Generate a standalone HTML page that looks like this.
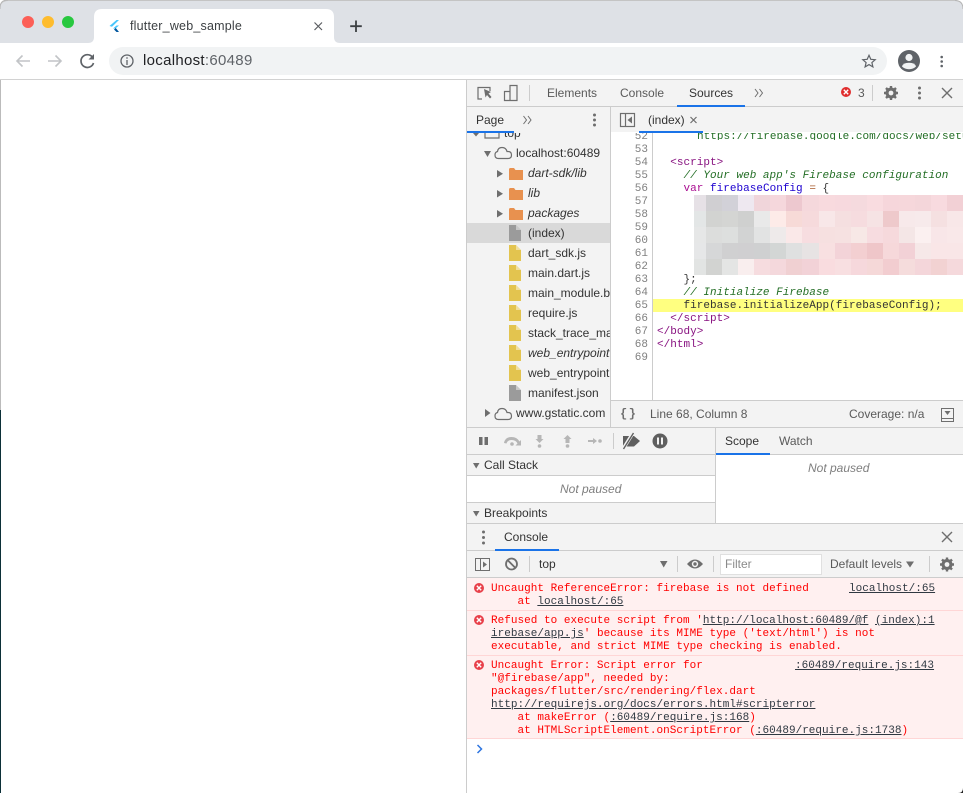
<!DOCTYPE html>
<html><head><meta charset="utf-8"><title>flutter_web_sample</title>
<style>
html,body{margin:0;padding:0;width:963px;height:793px;overflow:hidden;background:#fff}
body{position:relative;font-family:"Liberation Sans",sans-serif;font-size:12px;color:#333}
div{position:absolute}
.t{position:absolute;white-space:pre;line-height:14px}
.m{position:absolute;white-space:pre;font-family:"Liberation Mono",monospace;font-size:11px;line-height:13px;margin-top:1px;letter-spacing:.02px}
.b{position:absolute;background:#ccc}
.e{color:#f00}
.u{color:#303942;text-decoration:underline}
.n{position:absolute;left:611px;width:37px;text-align:right;color:#808080;font-family:"Liberation Mono",monospace;font-size:11px;line-height:13px;margin-top:1px}
.p{color:#881280}.c{color:#236e25;font-style:italic}
svg{position:absolute;overflow:visible}
</style></head><body>
<div style="left:0;top:0;width:963px;height:793px;background:#fff"></div>
<div style="left:0;top:80px;width:1px;height:330px;background:#bbb"></div>
<div style="left:0;top:410px;width:1px;height:383px;background:#0c3038"></div>
<div style="left:0;top:0;width:963px;height:43px;background:#dee1e6;border-radius:8px 8px 0 0;box-sizing:border-box;border-top:1px solid #c4c4c4"></div>
<svg style="left:0;top:0" width="963" height="80">
<path d="M0 9V8Q0 0 8 0" fill="none" stroke="#b5b5b5"/><path d="M955 0.5Q963 0.5 963 9" fill="none" stroke="#b5b5b5"/>
<circle cx="28" cy="22" r="6" fill="#fc5f57"/><circle cx="48" cy="22" r="6" fill="#febc2e"/><circle cx="68" cy="22" r="6" fill="#28c840"/>
<path d="M88 43Q94 43 94 37V17Q94 9 102 9H326Q334 9 334 17V37Q334 43 340 43Z" fill="#fff"/>
<path d="M109.500 26L116.500 20H119L112 26.800Z" fill="#47c5fb"/><path d="M113 28.500L116.500 25.500H119L115.500 28.500Z" fill="#47c5fb"/><path d="M114 29.500L115.800 28L119 32H116.500Z" fill="#00569e"/>
<path d="M314.500 22.500L322 30M322 22.500L314.500 30" stroke="#5a5d61" stroke-width="1.200" fill="none"/>
<path d="M356 20.500V32M350.200 26.200H361.800" stroke="#3c4043" stroke-width="1.800" fill="none"/>
<path d="M30 61H17M22.500 55.500L17 61L22.500 66.500" stroke="#c2c4c7" stroke-width="1.600" fill="none"/>
<path d="M48 61H61M55.500 55.500L61 61L55.500 66.500" stroke="#c2c4c7" stroke-width="1.600" fill="none"/>
<path d="M92.500 57.200A6.400 6.400 0 1 0 93.500 63" stroke="#5f6368" stroke-width="1.700" fill="none"/><path d="M94 54V59.500H88.500Z" fill="#5f6368"/>
</svg>
<div style="left:109px;top:47px;width:778px;height:28px;background:#f1f3f4;border-radius:14px"></div>
<div class="t" style="left:130px;top:19px;color:#3c4043;font-size:12.500px;letter-spacing:.2px">flutter_web_sample</div>
<div class="t" style="left:143px;top:53px;font-size:15px;line-height:16px;color:#202124;letter-spacing:.3px">localhost<span style="color:#5f6368">:60489</span></div>
<svg style="left:0;top:0" width="963" height="80">
<circle cx="127" cy="61" r="6" fill="none" stroke="#5f6368" stroke-width="1.300"/><path d="M127 60V65M127 57.300V58.700" stroke="#5f6368" stroke-width="1.300"/>
<path d="M869 55.300L870.800 59.300L875.200 59.700L871.900 62.600L872.900 66.900L869 64.600L865.100 66.900L866.100 62.600L862.800 59.700L867.200 59.300Z" fill="none" stroke="#5f6368" stroke-width="1.200"/>
<circle cx="909" cy="61" r="11" fill="#5f6368"/><circle cx="909" cy="57.500" r="3.600" fill="#f1f3f4"/><path d="M902 66.500Q903 62.800 909 62.800Q915 62.800 916 66.500Q913.500 69.200 909 69.200Q904.500 69.200 902 66.500Z" fill="#f1f3f4"/>
<circle cx="941.700" cy="57" r="1.300" fill="#5f6368"/><circle cx="941.700" cy="61.500" r="1.300" fill="#5f6368"/><circle cx="941.700" cy="66" r="1.300" fill="#5f6368"/>
</svg>
<div class="b" style="left:0;top:79px;width:963px;height:1px;background:#d2d2d2"></div>

<!-- devtools backgrounds -->
<div style="left:466px;top:80px;width:497px;height:26px;background:#f3f3f3"></div>
<div style="left:467px;top:107px;width:143px;height:25px;background:#f3f3f3"></div>
<div style="left:611px;top:107px;width:352px;height:25px;background:#f3f3f3"></div>
<div style="left:467px;top:132px;width:143px;height:296px;background:#f3f3f3"></div>
<div style="left:611px;top:401px;width:352px;height:26px;background:#f3f3f3"></div>
<div style="left:467px;top:428px;width:248px;height:26px;background:#f3f3f3"></div>
<div style="left:716px;top:428px;width:247px;height:26px;background:#f3f3f3"></div>
<div style="left:467px;top:455px;width:248px;height:20px;background:#f3f3f3"></div>
<div style="left:467px;top:503px;width:248px;height:20px;background:#f3f3f3"></div>
<div style="left:467px;top:524px;width:496px;height:26px;background:#f3f3f3"></div>
<div style="left:467px;top:551px;width:496px;height:26px;background:#f3f3f3"></div>
<div style="left:467px;top:223px;width:143px;height:20px;background:#d9d9d9"></div>
<div style="left:467px;top:578px;width:496px;height:160px;background:#fff0f0"></div>

<!-- borders -->
<div class="b" style="left:466px;top:80px;width:1px;height:713px"></div>
<div class="b" style="left:466px;top:106px;width:497px;height:1px"></div>
<div class="b" style="left:610px;top:107px;width:1px;height:321px"></div>
<div class="b" style="left:652px;top:132px;width:1px;height:268px"></div>
<div class="b" style="left:611px;top:400px;width:352px;height:1px"></div>
<div class="b" style="left:467px;top:427px;width:496px;height:1px"></div>
<div class="b" style="left:467px;top:454px;width:496px;height:1px"></div>
<div class="b" style="left:467px;top:475px;width:248px;height:1px"></div>
<div class="b" style="left:467px;top:502px;width:248px;height:1px"></div>
<div class="b" style="left:715px;top:428px;width:1px;height:95px"></div>
<div class="b" style="left:467px;top:523px;width:496px;height:1px"></div>
<div class="b" style="left:467px;top:550px;width:496px;height:1px"></div>
<div class="b" style="left:467px;top:577px;width:496px;height:1px"></div>
<div class="b" style="left:467px;top:610px;width:496px;height:1px;background:#ffd6d6"></div>
<div class="b" style="left:467px;top:655px;width:496px;height:1px;background:#ffd6d6"></div>
<div class="b" style="left:467px;top:738px;width:496px;height:1px;background:#ffd6d6"></div>
<div class="b" style="left:529px;top:85px;width:1px;height:16px"></div>
<div class="b" style="left:872px;top:85px;width:1px;height:16px"></div>
<div class="b" style="left:677px;top:105px;width:68px;height:2px;background:#1a73e8"></div>
<div class="b" style="left:639px;top:131px;width:64px;height:2px;background:#1a73e8"></div>
<div class="b" style="left:716px;top:453px;width:54px;height:2px;background:#1a73e8"></div>
<div class="b" style="left:495px;top:549px;width:64px;height:2px;background:#1a73e8"></div>

<!-- toolbar text -->
<div class="t" style="left:547px;top:86px;color:#5a5a5a">Elements</div>
<div class="t" style="left:620px;top:86px;color:#5a5a5a">Console</div>
<div class="t" style="left:689px;top:86px;color:#333">Sources</div>
<div class="t" style="left:858px;top:86px;color:#5a5a5a">3</div>
<div class="t" style="left:476px;top:113px;color:#333">Page</div>
<div class="t" style="left:648px;top:113px;color:#333">(index)</div>
<svg style="left:0;top:0" width="963" height="793">
<g fill="none" stroke="#6e6e6e" stroke-width="1.200">
<path d="M482 99H478V87.500H490V91"/><path d="M504.500 91.500H510V100.500H504.500ZM510 91V85.500H517V100.500H510" />
<path d="M755 89L758 93L755 97M759.500 89L762.500 93L759.500 97" stroke-width="1"/>
<path d="M523.500 116L526.500 120L523.500 124M528 116L531 120L528 124" stroke-width="1"/>
<path d="M942 88L952 98M952 88L942 98" stroke-width="1.400"/>
<path d="M690.500 117L696.500 123M696.500 117L690.500 123" stroke-width="1.200"/>
<rect x="620.500" y="113.500" width="14" height="13"/><path d="M625.500 113.500V126.500"/>
</g>
<path d="M484 89L491 92L488.500 93.500L491.500 97L490 98.500L487 95L485.500 97.500Z" fill="#6e6e6e"/>
<path d="M632 116.500V123.500L627.500 120Z" fill="#6e6e6e"/>
<circle cx="846" cy="92" r="5" fill="#e02d2d"/><path d="M843.800 89.800L848.200 94.200M848.200 89.800L843.800 94.200" stroke="#fff" stroke-width="1.400"/>
<g fill="#6e6e6e"><circle cx="919.500" cy="88" r="1.500"/><circle cx="919.500" cy="93" r="1.500"/><circle cx="919.500" cy="98" r="1.500"/>
<circle cx="594.500" cy="115" r="1.500"/><circle cx="594.500" cy="120" r="1.500"/><circle cx="594.500" cy="125" r="1.500"/></g>
<circle cx="891" cy="93" r="5.500" fill="#6e6e6e"/><path d="M891 86V100M884 93H898M886 88L896 98M896 88L886 98" stroke="#6e6e6e" stroke-width="2.400"/><circle cx="891" cy="93" r="2.400" fill="#f3f3f3"/>
</svg>
<div class="b" style="left:467px;top:131px;width:47px;height:2px;background:#1a73e8"></div>

<!-- file tree -->
<div style="left:467px;top:133px;width:143px;height:7px;overflow:hidden"><div class="t" style="left:37px;top:-7px;color:#333">top</div></div>
<div class="t" style="left:516px;top:146px;color:#333">localhost:60489</div>
<div class="t" style="left:528px;top:166px;font-style:italic">dart-sdk/lib</div>
<div class="t" style="left:528px;top:186px;font-style:italic">lib</div>
<div class="t" style="left:528px;top:206px;font-style:italic">packages</div>
<div class="t" style="left:528px;top:226px">(index)</div>
<div class="t" style="left:528px;top:246px">dart_sdk.js</div>
<div class="t" style="left:528px;top:266px">main.dart.js</div>
<div class="t" style="left:528px;top:286px;width:82px;overflow:hidden">main_module.bootstrap.js</div>
<div class="t" style="left:528px;top:306px">require.js</div>
<div class="t" style="left:528px;top:326px;width:82px;overflow:hidden">stack_trace_mapper.js</div>
<div class="t" style="left:528px;top:346px;width:82px;overflow:hidden;font-style:italic">web_entrypoint.dart</div>
<div class="t" style="left:528px;top:366px;width:82px;overflow:hidden">web_entrypoint.dart.js</div>
<div class="t" style="left:528px;top:386px">manifest.json</div>
<div class="t" style="left:516px;top:406px">www.gstatic.com</div>
<svg style="left:0;top:0" width="963" height="793">
<defs>
<path id="f" d="M0 1.500Q0 0 1.500 0H5L6.500 2H14V12H0Z" fill="#e8914f"/>
<path id="d" d="M0 0H7L12 5V16H0Z"/>
<path id="k" d="M7 0L12 5H7Z" fill="#fff" opacity=".45"/>
</defs>
<path d="M473 133H479L476 136.500Z" fill="#6e6e6e"/>
<path d="M485 133V138H499V133" fill="none" stroke="#6e6e6e" stroke-width="1.200"/>
<path d="M484 151H491L487.500 157Z" fill="#6e6e6e"/>
<path d="M497 170V177.500L503 173.700Z" fill="#6e6e6e"/><path d="M497 190V197.500L503 193.700Z" fill="#6e6e6e"/><path d="M497 210V217.500L503 213.700Z" fill="#6e6e6e"/>
<path d="M485 409V417L490.500 413Z" fill="#6e6e6e"/>
<g fill="none" stroke="#6e6e6e" stroke-width="1.200">
<path d="M498.500 158.500H508Q511.500 158.500 511.500 155Q511.500 151.500 508 151.500H507Q506 147.500 502 147.500Q498 147.500 497.500 151.500Q495 152 495 155Q495 158.500 498.500 158.500Z"/>
<path d="M498.500 419.500H508Q511.500 419.500 511.500 416Q511.500 412.500 508 412.500H507Q506 408.500 502 408.500Q498 408.500 497.500 412.500Q495 413 495 416Q495 419.500 498.500 419.500Z"/>
</g>
<use href="#f" x="509" y="168"/><use href="#f" x="509" y="188"/><use href="#f" x="509" y="208"/>
<use href="#d" x="509" y="225" fill="#9b9b9b"/><use href="#k" x="509" y="225"/>
<g fill="#e3c44f"><use href="#d" x="509" y="245"/><use href="#d" x="509" y="265"/><use href="#d" x="509" y="285"/><use href="#d" x="509" y="305"/><use href="#d" x="509" y="325"/><use href="#d" x="509" y="345"/><use href="#d" x="509" y="365"/></g>
<use href="#k" x="509" y="245"/><use href="#k" x="509" y="265"/><use href="#k" x="509" y="285"/><use href="#k" x="509" y="305"/><use href="#k" x="509" y="325"/><use href="#k" x="509" y="345"/><use href="#k" x="509" y="365"/>
<use href="#d" x="509" y="385" fill="#9b9b9b"/><use href="#k" x="509" y="385"/>
</svg>

<!-- code editor -->
<div style="left:611px;top:133px;width:352px;height:267px;overflow:hidden;background:#fff">
<div style="left:42px;top:166px;width:310px;height:13px;background:#ffff80"></div>
</div>
<div class="b" style="left:652px;top:133px;width:1px;height:267px"></div>
<div class="m" style="left:611px;top:132px;width:352px;height:7px;overflow:hidden"><span style="position:relative;top:-2px;left:86px;color:#236e25">https://firebase.google.com/docs/web/setup</span></div>
<div class="n" style="top:132px;height:7px;overflow:hidden"><span style="position:relative;top:-2px">52</span></div>
<div class="n" style="top:143px">53</div><div class="n" style="top:156px">54</div><div class="n" style="top:169px">55</div><div class="n" style="top:182px">56</div><div class="n" style="top:195px">57</div><div class="n" style="top:208px">58</div><div class="n" style="top:221px">59</div><div class="n" style="top:234px">60</div><div class="n" style="top:247px">61</div><div class="n" style="top:260px">62</div><div class="n" style="top:273px">63</div><div class="n" style="top:286px">64</div><div class="n" style="top:299px">65</div><div class="n" style="top:312px">66</div><div class="n" style="top:325px">67</div><div class="n" style="top:338px">68</div><div class="n" style="top:351px">69</div>
<div class="m" style="left:657px;top:156px">  <span class="p">&lt;script&gt;</span></div>
<div class="m c" style="left:657px;top:169px">    // Your web app's Firebase configuration</div>
<div class="m" style="left:657px;top:182px">    <span style="color:#aa0d91">var</span> <span style="color:#1c00cf">firebaseConfig</span> <span style="color:#a85b2c">=</span> {</div>
<div class="m" style="left:657px;top:273px">    };</div>
<div class="m c" style="left:657px;top:286px">    // Initialize Firebase</div>
<div class="m" style="left:657px;top:299px">    firebase.initializeApp(firebaseConfig);</div>
<div class="m p" style="left:657px;top:312px">  &lt;/script&gt;</div>
<div class="m p" style="left:657px;top:325px">&lt;/body&gt;</div>
<div class="m p" style="left:657px;top:338px">&lt;/html&gt;</div>
<svg style="left:694px;top:195px" width="269" height="80" shape-rendering="crispEdges">
<g>
<rect x="0" y="0" width="12" height="16" fill="#e6e1e6"/><rect x="12" y="0" width="16" height="16" fill="#d0cfd2"/><rect x="28" y="0" width="16" height="16" fill="#d2d1d8"/><rect x="44" y="0" width="16" height="16" fill="#eee8f0"/><rect x="60" y="0" width="16" height="16" fill="#f0d5da"/><rect x="76" y="0" width="16" height="16" fill="#f5d7dc"/><rect x="92" y="0" width="16" height="16" fill="#edc8cf"/><rect x="108" y="0" width="17" height="16" fill="#f5d8dc"/><rect x="125" y="0" width="16" height="16" fill="#f8dade"/><rect x="141" y="0" width="16" height="16" fill="#f7d9de"/><rect x="157" y="0" width="16" height="16" fill="#f5dade"/><rect x="173" y="0" width="16" height="16" fill="#f9dce0"/><rect x="189" y="0" width="16" height="16" fill="#f6d6db"/><rect x="205" y="0" width="16" height="16" fill="#f6d7db"/><rect x="221" y="0" width="16" height="16" fill="#f4d6da"/><rect x="237" y="0" width="16" height="16" fill="#f8dadf"/><rect x="253" y="0" width="16" height="16" fill="#f2d0d5"/>
<rect x="0" y="16" width="12" height="16" fill="#e3e6e6"/><rect x="12" y="16" width="16" height="16" fill="#d2d3d1"/><rect x="28" y="16" width="16" height="16" fill="#d4d5d3"/><rect x="44" y="16" width="16" height="16" fill="#cfd0cf"/><rect x="60" y="16" width="16" height="16" fill="#e9e9e9"/><rect x="76" y="16" width="16" height="16" fill="#fdebe8"/><rect x="92" y="16" width="16" height="16" fill="#f7dad7"/><rect x="108" y="16" width="17" height="16" fill="#f6dadc"/><rect x="125" y="16" width="16" height="16" fill="#f8e7e8"/><rect x="141" y="16" width="16" height="16" fill="#f5dfe0"/><rect x="157" y="16" width="16" height="16" fill="#f6dcdf"/><rect x="173" y="16" width="16" height="16" fill="#f6e3e4"/><rect x="189" y="16" width="16" height="16" fill="#eec9cb"/><rect x="205" y="16" width="16" height="16" fill="#f7e9ea"/><rect x="221" y="16" width="16" height="16" fill="#f7eaeb"/><rect x="237" y="16" width="16" height="16" fill="#f5e0e1"/><rect x="253" y="16" width="16" height="16" fill="#f8e7e8"/>
<rect x="0" y="32" width="12" height="16" fill="#e6e7e7"/><rect x="12" y="32" width="16" height="16" fill="#dcdddc"/><rect x="28" y="32" width="16" height="16" fill="#dddfde"/><rect x="44" y="32" width="16" height="16" fill="#d2d3d3"/><rect x="60" y="32" width="16" height="16" fill="#e2e3e3"/><rect x="76" y="32" width="16" height="16" fill="#eeeaea"/><rect x="92" y="32" width="16" height="16" fill="#fae8e8"/><rect x="108" y="32" width="17" height="16" fill="#f7dde0"/><rect x="125" y="32" width="16" height="16" fill="#f6e0e0"/><rect x="141" y="32" width="16" height="16" fill="#f6e1e1"/><rect x="157" y="32" width="16" height="16" fill="#f7e8e6"/><rect x="173" y="32" width="16" height="16" fill="#f7dce0"/><rect x="189" y="32" width="16" height="16" fill="#f6d9dc"/><rect x="205" y="32" width="16" height="16" fill="#f4e6e6"/><rect x="221" y="32" width="16" height="16" fill="#fbf0f0"/><rect x="237" y="32" width="16" height="16" fill="#f8e6e8"/><rect x="253" y="32" width="16" height="16" fill="#f9e8e9"/>
<rect x="0" y="48" width="12" height="16" fill="#e6e7e8"/><rect x="12" y="48" width="16" height="16" fill="#d6d7d8"/><rect x="28" y="48" width="16" height="16" fill="#d0d0d1"/><rect x="44" y="48" width="16" height="16" fill="#d0cfd1"/><rect x="60" y="48" width="16" height="16" fill="#cfd0d1"/><rect x="76" y="48" width="16" height="16" fill="#d3d6d5"/><rect x="92" y="48" width="16" height="16" fill="#dfe0e0"/><rect x="108" y="48" width="17" height="16" fill="#e7e3e3"/><rect x="125" y="48" width="16" height="16" fill="#f8e0e1"/><rect x="141" y="48" width="16" height="16" fill="#f3d3d8"/><rect x="157" y="48" width="16" height="16" fill="#f3cfd1"/><rect x="173" y="48" width="16" height="16" fill="#efc6c9"/><rect x="189" y="48" width="16" height="16" fill="#f6d8da"/><rect x="205" y="48" width="16" height="16" fill="#f2d1d6"/><rect x="221" y="48" width="16" height="16" fill="#f6e8e8"/><rect x="237" y="48" width="16" height="16" fill="#f9e6e7"/><rect x="253" y="48" width="16" height="16" fill="#f9e6e7"/>
<rect x="0" y="64" width="12" height="16" fill="#e2e4e3"/><rect x="12" y="64" width="16" height="16" fill="#d2d3d1"/><rect x="28" y="64" width="16" height="16" fill="#e4e5e4"/><rect x="44" y="64" width="16" height="16" fill="#f9eeee"/><rect x="60" y="64" width="16" height="16" fill="#f6dcdf"/><rect x="76" y="64" width="16" height="16" fill="#f4d8dc"/><rect x="92" y="64" width="16" height="16" fill="#f0d0d2"/><rect x="108" y="64" width="17" height="16" fill="#f2d2d7"/><rect x="125" y="64" width="16" height="16" fill="#f9dcdf"/><rect x="141" y="64" width="16" height="16" fill="#f8dfe1"/><rect x="157" y="64" width="16" height="16" fill="#f6d8dc"/><rect x="173" y="64" width="16" height="16" fill="#f5d8d8"/><rect x="189" y="64" width="16" height="16" fill="#f2cdd0"/><rect x="205" y="64" width="16" height="16" fill="#f5dcdc"/><rect x="221" y="64" width="16" height="16" fill="#f4d6da"/><rect x="237" y="64" width="16" height="16" fill="#f2d2d2"/><rect x="253" y="64" width="16" height="16" fill="#f5d9dc"/>
</g></svg>

<!-- editor footer -->
<div class="t" style="left:650px;top:407px;color:#5a5a5a">Line 68, Column 8</div>
<div class="t" style="left:849px;top:407px;color:#5a5a5a">Coverage: n/a</div>
<div class="t" style="left:620px;top:407px;color:#6e6e6e;font-family:'Liberation Mono',monospace;font-size:12px;font-weight:bold;letter-spacing:1.500px">{}</div>
<svg style="left:0;top:0" width="963" height="793">
<rect x="941.500" y="408.500" width="12" height="13" fill="none" stroke="#6e6e6e"/><path d="M941.500 418.500H953.500" stroke="#6e6e6e"/><path d="M944.500 411H950.500L947.500 415Z" fill="#6e6e6e"/>
<!-- debug toolbar -->
<path d="M479 437H482.500V445H479ZM484.500 437H488V445H484.500Z" fill="#6e6e6e"/>
<g fill="#b6b6b6"><path d="M504 443Q505 437 511.500 437Q517 437 519.500 441.500L521 440V445.500H515.500L517.500 443.500Q516 440 511.500 440Q507.500 440 506.500 443.500Z"/><circle cx="512" cy="444" r="1.800"/>
<path d="M537.500 435H541.500V439H543.500L539.500 443L535.500 439H537.500Z"/><circle cx="539.500" cy="446" r="1.800"/>
<path d="M565.500 443H569.500V439H571.500L567.500 435L563.500 439H565.500Z"/><circle cx="567.500" cy="446" r="1.800"/>
<path d="M588 440H593V438L597 441L593 444V442H588Z"/><circle cx="600" cy="441" r="1.800"/></g>
<path d="M623 436H634L640 441L634 446.500H623Z" fill="#5f5f5f"/><path d="M623 449L633 433" stroke="#f3f3f3" stroke-width="3.500"/><path d="M623.500 449L633.500 433" stroke="#5f5f5f" stroke-width="1.400"/>
<circle cx="660" cy="441" r="7.500" fill="#5f5f5f"/><path d="M657 437.500H659V444.500H657ZM661 437.500H663V444.500H661Z" fill="#f3f3f3"/>
<path d="M473 463H479.500L476.200 468.500Z" fill="#6e6e6e"/><path d="M473 511H479.500L476.200 516.500Z" fill="#6e6e6e"/>
<!-- console icons -->
<circle cx="483.500" cy="532" r="1.500" fill="#6e6e6e"/><circle cx="483.500" cy="537.500" r="1.500" fill="#6e6e6e"/><circle cx="483.500" cy="543" r="1.500" fill="#6e6e6e"/>
<path d="M942 532L952 542M952 532L942 542" stroke="#6e6e6e" stroke-width="1.400"/>
<rect x="475.500" y="558.500" width="14" height="12" fill="none" stroke="#6e6e6e"/><path d="M480.500 558.500V570.500" stroke="#6e6e6e"/><path d="M483 561.500V567.500L487 564.500Z" fill="#6e6e6e"/>
<circle cx="511.500" cy="564" r="5.500" fill="none" stroke="#6e6e6e" stroke-width="1.800"/><path d="M507.800 560.300L515.200 567.700" stroke="#6e6e6e" stroke-width="1.800"/>
<path d="M660 561H667.500L663.700 567.500Z" fill="#6e6e6e"/>
<path d="M687 564Q695 555 703 564Q695 573 687 564Z" fill="#6e6e6e"/><circle cx="695" cy="564" r="3.200" fill="#f3f3f3"/><circle cx="695" cy="564" r="1.700" fill="#6e6e6e"/>
<path d="M906 561.500H914L910 567.500Z" fill="#6e6e6e"/>
<circle cx="947" cy="564.500" r="5.500" fill="#6e6e6e"/><path d="M947 557.500V571.500M940 564.500H954M942 559.500L952 569.500M952 559.500L942 569.500" stroke="#6e6e6e" stroke-width="2.400"/><circle cx="947" cy="564.500" r="2.400" fill="#f3f3f3"/>
<!-- error icons -->
<g><circle cx="479" cy="588" r="5" fill="#e8404a"/><path d="M476.800 585.800L481.200 590.200M481.200 585.800L476.800 590.200" stroke="#fff" stroke-width="1.400"/>
<circle cx="479" cy="620" r="5" fill="#e8404a"/><path d="M476.800 617.800L481.200 622.200M481.200 617.800L476.800 622.200" stroke="#fff" stroke-width="1.400"/>
<circle cx="479" cy="665" r="5" fill="#e8404a"/><path d="M476.800 662.800L481.200 667.200M481.200 662.800L476.800 667.200" stroke="#fff" stroke-width="1.400"/></g>
<path d="M477.500 745L481.500 749L477.500 753" fill="none" stroke="#2d75e0" stroke-width="1.500"/>
<path d="M958 793Q963 793 963 788V793Z" fill="#222"/>
</svg>
<div class="b" style="left:529px;top:556px;width:1px;height:16px"></div>
<div class="b" style="left:677px;top:556px;width:1px;height:16px"></div>
<div class="b" style="left:713px;top:556px;width:1px;height:16px"></div>
<div class="b" style="left:929px;top:556px;width:1px;height:16px"></div>
<div class="b" style="left:613px;top:433px;width:1px;height:16px"></div>

<!-- debugger text -->
<div class="t" style="left:725px;top:434px;color:#333">Scope</div>
<div class="t" style="left:779px;top:434px;color:#5a5a5a">Watch</div>
<div class="t" style="left:484px;top:458px;color:#333">Call Stack</div>
<div class="t" style="left:560px;top:482px;color:#7f7f7f;font-style:italic">Not paused</div>
<div class="t" style="left:808px;top:461px;color:#7f7f7f;font-style:italic">Not paused</div>
<div class="t" style="left:484px;top:506px;color:#333">Breakpoints</div>
<div class="t" style="left:504px;top:530px;color:#333">Console</div>
<div class="t" style="left:539px;top:557px;color:#333">top</div>
<div style="left:720px;top:554px;width:100px;height:19px;background:#fff;border:1px solid #e0e0e0"></div>
<div class="t" style="left:725px;top:557px;color:#8a8a8a">Filter</div>
<div class="t" style="left:830px;top:557px;color:#5a5a5a">Default levels</div>

<!-- console messages -->
<div class="m e" style="left:491px;top:582px">Uncaught ReferenceError: firebase is not defined</div>
<div class="m u" style="left:849px;top:582px">localhost/:65</div>
<div class="m e" style="left:491px;top:595px">    at <span class="u">localhost/:65</span></div>
<div class="m e" style="left:491px;top:614px">Refused to execute script from '<span class="u">http://localhost:60489/@f</span></div>
<div class="m u" style="left:875px;top:614px">(index):1</div>
<div class="m e" style="left:491px;top:627px"><span class="u">irebase/app.js</span>' because its MIME type ('text/html') is not</div>
<div class="m e" style="left:491px;top:640px">executable, and strict MIME type checking is enabled.</div>
<div class="m e" style="left:491px;top:659px">Uncaught Error: Script error for</div>
<div class="m u" style="left:795px;top:659px">:60489/require.js:143</div>
<div class="m e" style="left:491px;top:672px">"@firebase/app", needed by:</div>
<div class="m e" style="left:491px;top:685px">packages/flutter/src/rendering/flex.dart</div>
<div class="m u" style="left:491px;top:698px">http://requirejs.org/docs/errors.html#scripterror</div>
<div class="m e" style="left:491px;top:711px">    at makeError (<span class="u">:60489/require.js:168</span>)</div>
<div class="m e" style="left:491px;top:724px">    at HTMLScriptElement.onScriptError (<span class="u">:60489/require.js:1738</span>)</div>
</body></html>
